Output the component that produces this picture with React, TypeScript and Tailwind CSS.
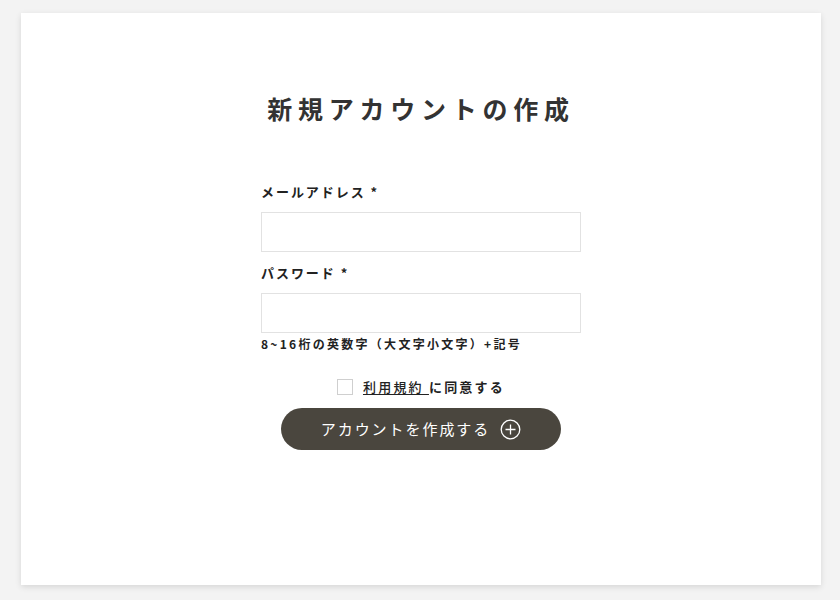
import React from "react";

export default function App() {
  const font = { fontFamily: '"Noto Sans CJK JP", "Noto Sans", sans-serif' };
  return (
    <div className="min-h-[600px] w-[840px] bg-[#f3f3f3] pt-[13px]" style={font}>
      <div className="ml-[21px] flex h-[572px] w-[800px] flex-col items-center bg-white shadow-[0_2px_6px_rgba(0,0,0,0.12)]">
        <h1 className="mt-[77px] h-[36px] text-[25px] font-bold leading-[36px] tracking-[0.23em] text-[#333]">
          新規アカウントの作成
        </h1>
        <div className="mt-[56px] flex w-[320px] flex-col">
          <label className="h-[20px] text-[13px] font-bold leading-[20px] tracking-[0.15em] text-[#222]">
            メールアドレス *
          </label>
          <input className="mt-[10px] h-[40px] w-[320px] border border-[#e2e2e2] outline-none" />
          <label className="mt-[11px] h-[20px] text-[13px] font-bold leading-[20px] tracking-[0.15em] text-[#222]">
            パスワード *
          </label>
          <input type="password" className="mt-[10px] h-[40px] w-[320px] border border-[#e2e2e2] outline-none" />
          <p className="mt-[2px] h-[18px] whitespace-nowrap text-[12px] font-bold leading-[18px] tracking-[0.19em] text-[#222]">
            8~16桁の英数字（大文字小文字）+記号
          </p>
        </div>
        <div className="mt-[25px] flex h-[18px] items-center gap-[10px]">
          <span className="h-[16px] w-[16px] border border-[#cfcfcf] bg-white" />
          <span className="text-[13px] font-bold leading-[18px] tracking-[0.17em] text-[#222]">
            <span className="font-medium underline underline-offset-2">利用規約 </span>に同意する
          </span>
        </div>
        <button className="mt-[12px] flex h-[42px] w-[280px] items-center justify-center gap-[10px] rounded-full bg-[#4a463e] text-white">
          <span className="text-[15px] leading-[20px] tracking-[0.13em]">アカウントを作成する</span>
          <svg width="21" height="21" viewBox="0 0 21 21" fill="none" stroke="white" strokeWidth="1.3">
            <circle cx="10.5" cy="10.5" r="9.3" />
            <path d="M10.5 5.5v10M5.5 10.5h10" />
          </svg>
        </button>
      </div>
    </div>
  );
}
